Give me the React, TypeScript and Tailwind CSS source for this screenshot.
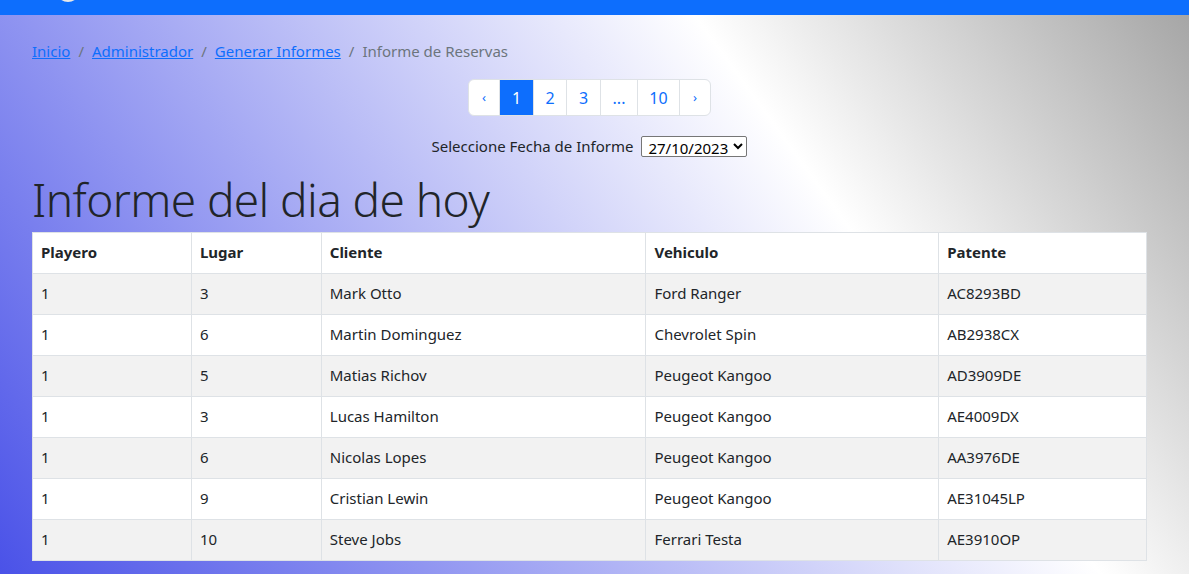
import React from 'react';

const rows = [
  ['1', '3', 'Mark Otto', 'Ford Ranger', 'AC8293BD'],
  ['1', '6', 'Martin Dominguez', 'Chevrolet Spin', 'AB2938CX'],
  ['1', '5', 'Matias Richov', 'Peugeot Kangoo', 'AD3909DE'],
  ['1', '3', 'Lucas Hamilton', 'Peugeot Kangoo', 'AE4009DX'],
  ['1', '6', 'Nicolas Lopes', 'Peugeot Kangoo', 'AA3976DE'],
  ['1', '9', 'Cristian Lewin', 'Peugeot Kangoo', 'AE31045LP'],
  ['1', '10', 'Steve Jobs', 'Ferrari Testa', 'AE3910OP'],
];

const widths = ['w-[159px]', 'w-[130px]', 'w-[325px]', 'w-[293px]', 'w-[208px]'];

const pages = [
  { label: '‹', w: 'w-[30px]', small: true },
  { label: '1', w: 'w-[34px]', active: true },
  { label: '2', w: 'w-[33px]' },
  { label: '3', w: 'w-[34px]' },
  { label: '...', w: 'w-[37px]' },
  { label: '10', w: 'w-[42px]' },
  { label: '›', w: 'w-[31px]', small: true },
];

export default function App() {
  return (
    <div className="h-[574px] overflow-hidden text-[#212529] font-['Noto_Sans',sans-serif] text-base">
      <div className="relative h-[15px] bg-[#0d6efd] overflow-hidden">
        <div className="absolute left-[56px] top-[-22px] w-[24px] h-[24px] rounded-full bg-[#e8e8e8]" />
      </div>
      <div className="h-[559px] bg-[linear-gradient(54deg,#4a52e8_0%,#ffffff_69%,#a6a6a6_100%)] pl-[32px] pt-[16px]">
        <nav className="h-[40px] flex items-center text-[15px] leading-6 mb-[8px]">
          <a href="#" className="text-[#0d6efd] underline">Inicio</a>
          <span className="px-[8px] text-[#6c757d]">/</span>
          <a href="#" className="text-[#0d6efd] underline">Administrador</a>
          <span className="px-[8px] text-[#6c757d]">/</span>
          <a href="#" className="text-[#0d6efd] underline">Generar Informes</a>
          <span className="px-[8px] text-[#6c757d]">/</span>
          <span className="text-[#6c757d]">Informe de Reservas</span>
        </nav>
        <div className="w-[1115px] flex flex-col items-center">
          <ul className="flex h-[37px] border border-[#dee2e6] rounded-[6px] overflow-hidden bg-white">
            {pages.map((p, i) => (
              <li
                key={i}
                className={`${p.w} flex items-center justify-center ${i > 0 ? 'border-l border-[#dee2e6]' : ''} ${
                  p.active ? 'bg-[#0d6efd] text-white border-[#0d6efd]' : 'text-[#0d6efd]'
                } ${p.small ? 'text-[13px]' : 'text-base'}`}
              >
                {p.label}
              </li>
            ))}
          </ul>
          <div className="mt-[19px] flex items-center gap-2 text-[15px]">
            <span>Seleccione Fecha de Informe</span>
            <select className="h-[21px] border border-[#767676] rounded-[2px] bg-white text-[15px] text-black px-[2px]">
              <option>27/10/2023</option>
            </select>
          </div>
        </div>
        <h1 className="mt-[11px] text-[46px] font-light leading-[60px] tracking-[-0.6px]">Informe del dia de hoy</h1>
        <table className="mt-[3px] w-[1115px] border-collapse bg-white text-[15px]">
          <thead>
            <tr className="h-[41px]">
              {['Playero', 'Lugar', 'Cliente', 'Vehiculo', 'Patente'].map((h, i) => (
                <th key={h} className={`${widths[i]} border border-[#dee2e6] px-[8px] text-left font-bold`}>
                  {h}
                </th>
              ))}
            </tr>
          </thead>
          <tbody>
            {rows.map((r, ri) => (
              <tr key={ri} className={`h-[41px] ${ri % 2 === 0 ? 'bg-[#f2f2f2]' : 'bg-white'}`}>
                {r.map((c, ci) => (
                  <td key={ci} className="border border-[#dee2e6] px-[8px]">
                    {c}
                  </td>
                ))}
              </tr>
            ))}
          </tbody>
        </table>
      </div>
    </div>
  );
}
